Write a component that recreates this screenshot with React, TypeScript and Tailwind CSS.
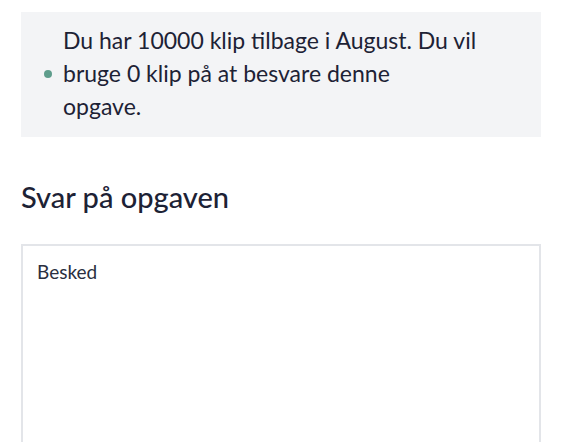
import React from 'react';

const App: React.FC = () => {
  return (
    <div className="min-h-screen bg-white pt-[12px] px-[21px] text-[#1d2235]" style={{ fontFamily: 'Lato, "Noto Sans", sans-serif' }}>
      <div className="bg-[#f3f4f6] flex items-center pl-[23px] pr-3 pt-[12px] pb-[14px]">
        <span className="w-[8px] h-[8px] rounded-full bg-[#5e9d8c] shrink-0" />
        <p className="ml-[11px] text-[23px] leading-[33px]">
          Du har 10000 klip tilbage i August. Du vil
          <br />
          bruge 0 klip på at besvare denne
          <br />
          opgave.
        </p>
      </div>
      <h2 className="mt-[44px] text-[29px] leading-[32px] font-medium">Svar på opgaven</h2>
      <div className="mt-[31px] border-2 border-[#e3e5e9] h-[220px] px-[14px] pt-[12px]">
        <span className="text-[19px] text-[#2a2f40]">Besked</span>
      </div>
    </div>
  );
};

export default App;
